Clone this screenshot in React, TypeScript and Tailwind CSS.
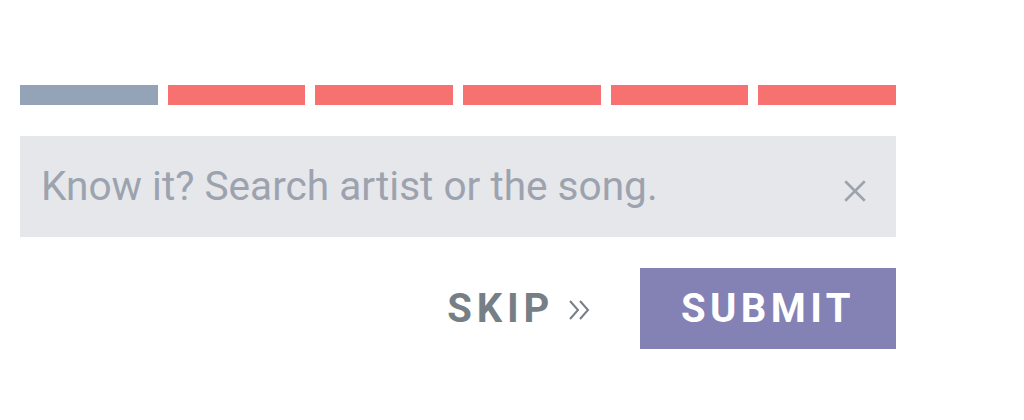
import { useState } from 'react';

const STEPS = ['done', 'miss', 'miss', 'miss', 'miss', 'miss'];

export default function App() {
  const [query, setQuery] = useState('');

  return (
    <div className="w-[1024px] h-[420px] bg-white" style={{ fontFamily: 'Roboto, "Noto Sans", sans-serif' }}>
      <div className="w-[876px] ml-[20px] pt-[85px]">
        {/* progress */}
        <div className="flex gap-[10px]">
          {STEPS.map((s, i) => (
            <div
              key={i}
              className={`flex-1 h-[20px] ${s === 'done' ? 'bg-[#94a3b8]' : 'bg-[#f87171]'}`}
            />
          ))}
        </div>

        {/* search */}
        <div className="mt-[31px] h-[101px] bg-[#e5e7eb] flex items-center pl-[21px] pr-[28px]">
          <input
            value={query}
            onChange={(e) => setQuery(e.target.value)}
            placeholder="Know it? Search artist or the song."
            className="flex-1 bg-transparent outline-none text-[40.6px] text-[#4b5563] placeholder:text-[#9ca3af]"
          />
          <button className="text-[#9ca3af] mt-[8px]" onClick={() => setQuery('')}>
            <svg width="26" height="26" viewBox="0 0 24 24" fill="none" stroke="currentColor" strokeWidth="2.4">
              <path d="M3 3 L21 21 M21 3 L3 21" />
            </svg>
          </button>
        </div>

        {/* actions */}
        <div className="mt-[31px] flex justify-end items-center">
          <button className="flex items-center text-[#767e86] font-bold text-[40px] tracking-[0.12em] mr-[50px]">
            SKIP
            <svg width="22" height="22" viewBox="0 0 22 22" fill="none" stroke="currentColor" strokeWidth="2" className="ml-[14px] mt-[2px]">
              <path d="M2 2 L10 11 L2 20 M12 2 L20 11 L12 20" />
            </svg>
          </button>
          <button className="w-[256px] h-[81px] bg-[#8482b5] text-white font-bold text-[40px] tracking-[0.11em]">
            SUBMIT
          </button>
        </div>
      </div>
    </div>
  );
}
